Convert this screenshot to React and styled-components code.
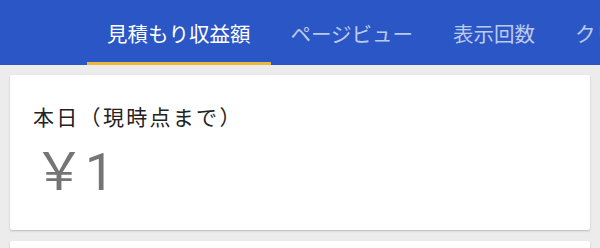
import React from 'react';
import styled, { createGlobalStyle } from 'styled-components';

const GlobalStyle = createGlobalStyle`
  html, body {
    margin: 0;
    padding: 0;
    background: #ececec;
    font-family: Roboto, "Noto Sans CJK JP", sans-serif;
    overflow: hidden;
  }
`;

const Header = styled.header`
  height: 65px;
  background: #2a56c6;
  display: flex;
  align-items: stretch;
  padding-left: 87px;
  overflow: hidden;
  white-space: nowrap;
`;

const Tab = styled.div`
  position: relative;
  display: flex;
  align-items: center;
  padding: 0 20px;
  font-family: "Noto Sans CJK JP", sans-serif;
  font-size: 20.5px;
  color: ${({ $active }) => ($active ? '#ffffff' : 'rgba(255, 255, 255, 0.7)')};
  flex-shrink: 0;

  &::after {
    content: '';
    position: absolute;
    left: 0;
    right: 0;
    bottom: 0;
    height: 3px;
    background: ${({ $active }) => ($active ? '#ebb83a' : 'transparent')};
  }
`;

const Content = styled.main`
  display: flex;
  flex-direction: column;
  gap: 11px;
  padding: 10px 10px 0;
`;

const Card = styled.section`
  background: #ffffff;
  border-radius: 2px;
  box-shadow: 0 1px 2px rgba(0, 0, 0, 0.22);
  height: ${({ $height }) => $height}px;
  padding: 27px 23px 0;
  box-sizing: border-box;
`;

const Label = styled.div`
  font-family: "Noto Sans CJK JP", sans-serif;
  font-size: 21px;
  line-height: 28px;
  letter-spacing: 2.3px;
  color: #222222;
`;

const Amount = styled.div`
  margin-top: 13px;
  font-family: Roboto, "Noto Sans CJK JP", sans-serif;
  font-size: 52px;
  line-height: 60px;
  color: #757575;
`;

const tabs = ['見積もり収益額', 'ページビュー', '表示回数', 'クリック数'];

export default function App() {
  return (
    <>
      <GlobalStyle />
      <Header>
        {tabs.map((t, i) => (
          <Tab key={t} $active={i === 0}>{t}</Tab>
        ))}
      </Header>
      <Content>
        <Card $height={155}>
          <Label>本日（現時点まで）</Label>
          <Amount>￥1</Amount>
        </Card>
        <Card $height={7} />
      </Content>
    </>
  );
}
